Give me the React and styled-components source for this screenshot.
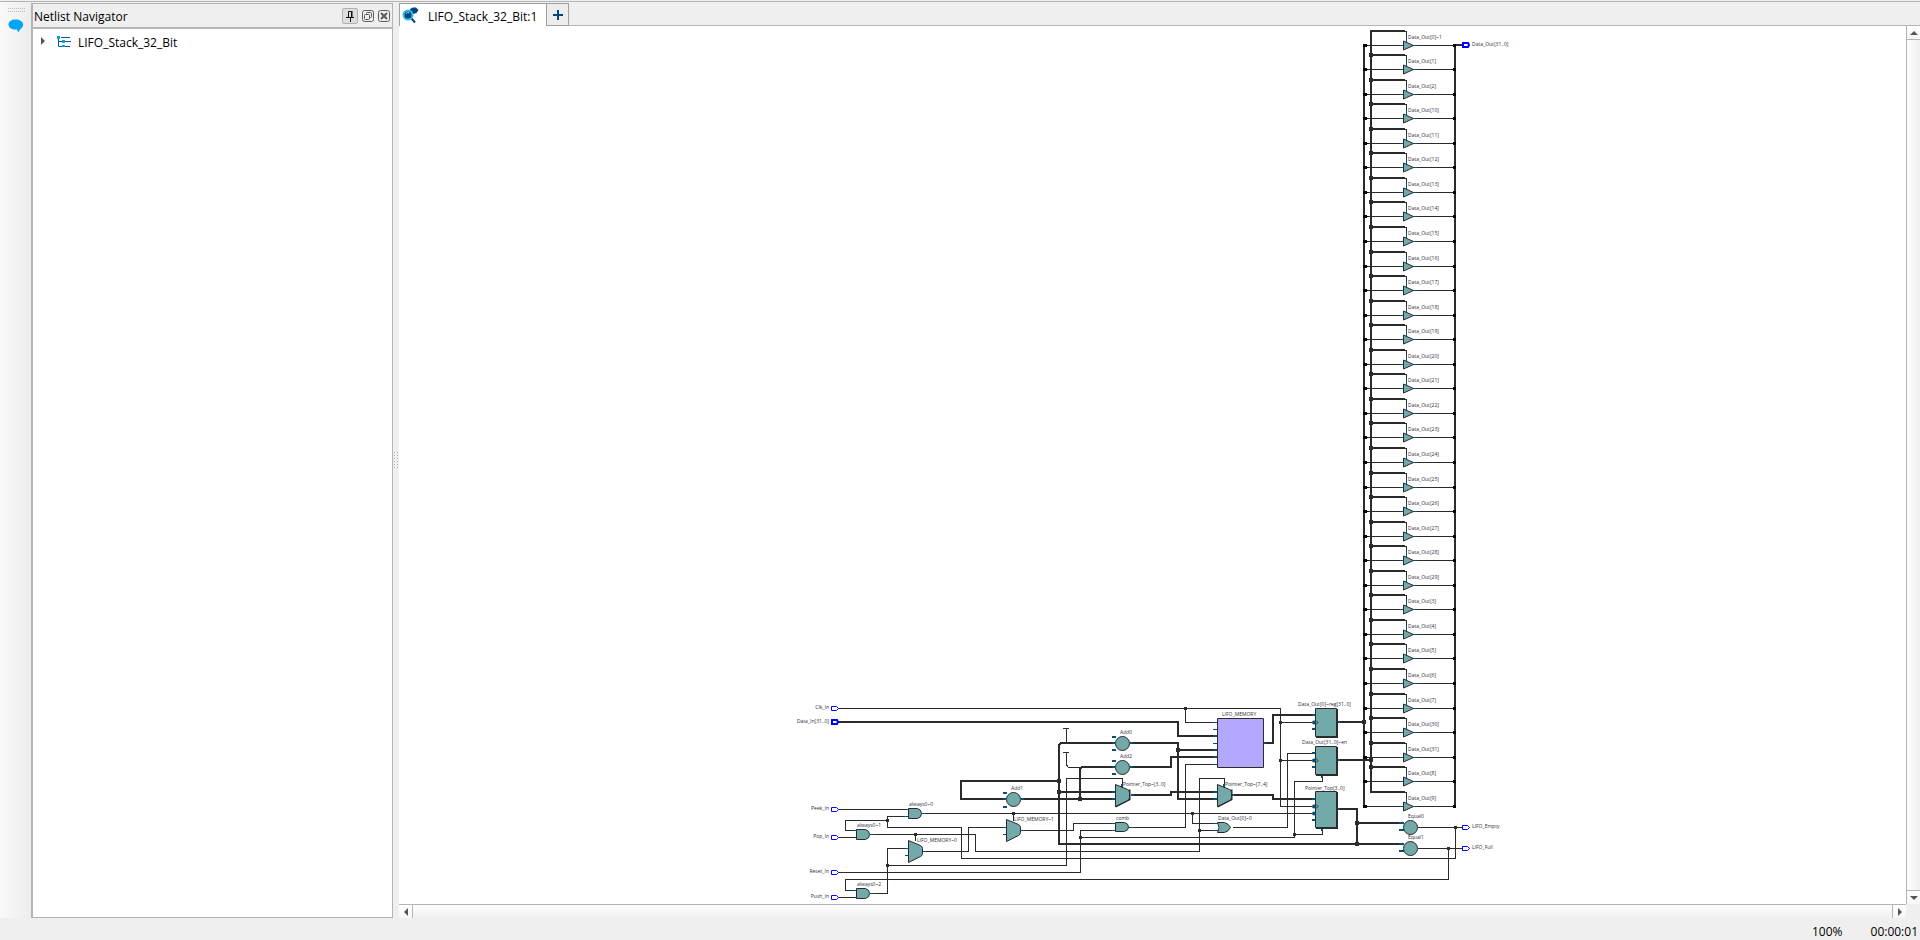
import React from 'react';
import styled, { createGlobalStyle } from 'styled-components';

const GlobalStyle = createGlobalStyle`
  *, *::before, *::after { box-sizing: border-box; }
  body {
    margin: 0;
    background: #efefef;
    color: #000;
    font: 12px/16px "Open Sans", "Noto Sans", sans-serif;
  }
  button { font: inherit; color: inherit; }
`;

const EDGE = '#b4b4b4';
const WIRE = '#2b2b2b';
const PIN = '#0a4f75';
const CELL = '#72aaaa';
const PORT = '#0000ff';

/* ---------- window frame ---------- */

const Window = styled.div`
  display: flex;
  flex-direction: column;
  height: 100vh;
  overflow: hidden;
  padding-top: 1px;
`;

const Main = styled.main`
  display: flex;
  flex: 1;
  min-height: 0;
  border-top: 1px solid ${EDGE};
`;

const ToolStrip = styled.aside`
  flex: 0 0 31px;
  display: flex;
  flex-direction: column;
  align-items: center;
  gap: 7px;
  padding: 6px 0 0 1px;
  background: linear-gradient(to right, #fafafa, #ececec);
`;

const ToolButton = styled.button`
  display: flex;
  padding: 0;
  border: 0;
  background: none;
`;

const Panel = styled.section`
  flex: 0 0 362px;
  display: flex;
  flex-direction: column;
  margin-top: 1px;
  border: 1px solid ${EDGE};
  border-left-width: 2px;
  background: #fff;
`;

const PanelHeader = styled.header`
  display: flex;
  align-items: center;
  gap: 4px;
  height: 25px;
  padding: 0 2px 0 1px;
  border-bottom: 2px solid ${EDGE};
  background: #efefef;
`;

const PanelTitle = styled.h1`
  flex: 1;
  margin: 0;
  font-size: 12px;
  font-weight: 400;
  line-height: 16px;
  padding-top: 3px;
`;

const HeaderButton = styled.button`
  display: flex;
  align-items: center;
  justify-content: center;
  width: ${(p) => (p.$pressed ? 16 : 12)}px;
  height: ${(p) => (p.$pressed ? 16 : 12)}px;
  padding: 0;
  border: ${(p) => (p.$pressed ? '1px solid #b0b0b0' : '0')};
  border-radius: 2px;
  background: ${(p) => (p.$pressed ? '#dedede' : 'none')};
`;

const Tree = styled.ul`
  flex: 1;
  margin: 0;
  padding: 4px 0 0 6px;
  list-style: none;
`;

const TreeRow = styled.li`
  display: flex;
  align-items: center;
  height: 18px;
`;

const Expander = styled.button`
  display: flex;
  width: 18px;
  padding: 0 0 2px 2px;
  border: 0;
  background: none;
`;

const TreeLabel = styled.span`
  padding: 1px 0 0 7px;
`;

const Splitter = styled.div`
  flex: 0 0 6px;
  display: flex;
  align-items: center;
  justify-content: center;
`;

/* ---------- schematic view ---------- */

const Viewer = styled.section`
  flex: 1;
  min-width: 0;
  display: flex;
  flex-direction: column;
`;

const TabBar = styled.nav`
  display: flex;
  height: 24px;
  padding-top: 1px;
  border-bottom: 1px solid ${EDGE};
`;

const Tab = styled.button`
  display: flex;
  align-items: center;
  width: 148px;
  height: 24px;
  padding: 0 0 0 2px;
  gap: 9px;
  border: 1px solid #a0a0a0;
  border-bottom-color: ${EDGE};
  background: #fff;

  span { padding-top: 4px; }
`;

const AddTab = styled.button`
  display: flex;
  align-items: center;
  justify-content: center;
  width: 22px;
  height: 23px;
  padding: 0;
  border: 1px solid #a0a0a0;
  border-left: 0;
  background: #ededed;
`;

const Stage = styled.div`
  flex: 1;
  min-height: 0;
  display: grid;
  grid-template: minmax(0, 1fr) 14px / minmax(0, 1fr) 14px;
`;

const Canvas = styled.div`
  overflow: hidden;
  background: #fff;

  svg { display: block; }
`;

const Scrollbar = styled.div`
  display: flex;
  justify-content: space-between;
  flex-direction: ${(p) => (p.$vertical ? 'column' : 'row')};
  border-left: ${(p) => (p.$vertical ? `1px solid ${EDGE}` : '0')};
  border-top: ${(p) => (p.$vertical ? '0' : `1px solid ${EDGE}`)};
  background: linear-gradient(${(p) => (p.$vertical ? 'to right' : 'to bottom')}, #fefefe, #f0f0f0);
`;

const ScrollButton = styled.button`
  display: flex;
  align-items: center;
  justify-content: center;
  flex: 0 0 14px;
  padding: 0;
  border: 0 solid ${EDGE};
  border-${(p) => p.$edge}-width: 1px;
  background: linear-gradient(#fff, #f6f6f6);
`;

const StatusBar = styled.footer`
  display: flex;
  justify-content: flex-end;
  gap: 28px;
  height: 22px;
  padding: 6px 2px 0 0;
`;

/* ---------- schematic drawing ---------- */

const Drawing = styled.svg`
  font-family: "Open Sans", "Noto Sans", sans-serif;
  font-size: 5px;
`;

const NetLabel = styled.text`
  fill: #2e2e3a;
`;

const Net = styled.path`
  fill: none;
  stroke: ${(p) => (p.$pin ? PIN : WIRE)};
  stroke-width: ${(p) => (p.$bus ? 2 : 1)};
  shape-rendering: crispEdges;
`;

const Body = styled.path`
  fill: ${(p) => p.$fill || CELL};
  stroke: ${WIRE};
  stroke-width: 1;
`;

const Dot = ({ x, y, bus }) => (
  <rect x={x - (bus ? 2 : 1)} y={y - (bus ? 2 : 1)} width={bus ? 4 : 3} height={bus ? 4 : 3} fill={WIRE} />
);

const Port = ({ x, y, bus }) => (
  <path
    d={bus
      ? `M${x + 1} ${y - 2}h5l1 2l-1 2h-5z`
      : `M${x + 0.5} ${y - 1.5}h5l2 2l-2 2h-5z`}
    fill="#fff"
    stroke={PORT}
    strokeWidth={bus ? 2 : 1}
  />
);

const AndGate = ({ x, y, w = 14, h = 10 }) => (
  <Body d={`M${x + 0.5} ${y + 0.5}h${w - 5}q4 1 4 ${h / 2}q0 ${h / 2 - 1} -4 ${h / 2}h-${w - 5}z`} />
);

const Mux = ({ x, y, h = 22, w = 14, shadow }) => (
  <>
    {shadow && (
      <path d={`M${x + 0.5} ${y + h + 0.5}l${w} -7v-10`} fill="none" stroke={WIRE} strokeWidth="2" />
    )}
    <Body d={`M${x + 0.5} ${y + 0.5}l${w - 2} 5q2 1 2 3v${h - 17}q0 2 -2 3l-${w - 2} 6z`} />
  </>
);

const Round = ({ x, y }) => (
  <circle cx={x} cy={y} r="7" fill={CELL} stroke={WIRE} strokeWidth="1" />
);

const Register = ({ y, h }) => (
  <>
    <rect x="1316" y={y + 1} width="22" height={h} fill={WIRE} />
    <Body d={`M1315.5 ${y + 0.5}h21v${h - 1}h-21z`} />
  </>
);

const order = [0, 1, 2, ...Array.from({ length: 20 }, (_, i) => i + 10), 3, 4, 5, 6, 7, 30, 31, 8, 9];

const outputs = order.map((bit, i) => ({
  name: bit === 0 ? 'Data_Out[0]~1' : `Data_Out[${bit}]`,
  y: Math.floor(45 + 24.558 * i),
  first: i === 0,
  last: i === order.length - 1,
}));

const Buffer = ({ name, y, first, last }) => (
  <g>
    <Net d={`M1364 ${y + 0.5}H1400M1417 ${y + 0.5}H1455`} />
    <Net $pin d={`M1400 ${y + 0.5}H1403M1413 ${y + 0.5}H1417`} />
    <Net $bus d={`M1370 ${y - 14}H1405`} />
    <Net d={`M1405 ${y - 13.5}h1.5v8`} />
    <Net $pin d={`M1406.5 ${y - 8}v5`} />
    <path d={`M1403.5 ${y - 4}v9l10 -4.5z`} fill={CELL} stroke={WIRE} />
    <rect x="1363" y={y - 1} width="4" height="3" fill="#000" />
    <rect x="1367" y={y} width="1" height="1" fill="#000" />
    <rect x="1453" y={y - 1} width="3" height="3" fill="#000" />
    {!first && !last && <Dot x={1371} y={y - 14} bus />}
    <NetLabel x="1408" y={y - 6}>{name}</NetLabel>
  </g>
);

const thinNets = [
  'M838 708.5H1280.5V806.5H1312',
  'M1185.5 708V722.5H1213',
  'M1280 722.5H1312M1280 760.5H1312',
  'M838 809.5H905',
  'M905 816.5H887.5V827.5H961.5V858.5H1455.5V827',
  'M887 820.5H845.5V830.5H854',
  'M838 837.5H856',
  'M873 834.5H975.5V851.5H1199.5V778.5H1224.5V784',
  'M915.5 834V841',
  'M905 848.5H887.5V893.5H872',
  'M926 851.5H968.5V827.5H1003',
  'M887 865.5H1066.5V778.5H1122.5V784',
  'M838 872.5H1080.5V830.5H1112',
  'M1080 837.5H1294.5V781.5H1322.5V778',
  'M1294 834.5H1322.5V831',
  'M854 890.5H845.5V879.5H1448.5V848',
  'M838 897.5H856',
  'M925 813.5H1312',
  'M1013.5 813V821',
  'M1192.5 813V823.5H1213',
  'M1024 830.5H1073.5V823.5H1112',
  'M1132 827.5H1185.5V764.5H1213',
  'M1199 830.5H1213',
  'M1233 827.5H1287.5V753.5H1312',
  'M1063 728.5H1069M1066.5 728V743',
  'M1063 752.5H1069M1066.5 752V765L1068.5 767.5H1082',
  'M1418 827.5H1462M1418 848.5H1462',
];

const busNets = [
  'M838 722H1178V736H1213',
  'M1003 799H961V781H1059',
  'M1112 743H1061L1059 745V844H1400',
  'M1059 792H1112',
  'M1024 799H1112',
  'M1080 799V769L1082 767H1112',
  'M1133 743H1178V799H1213',
  'M1178 750H1213',
  'M1133 767H1171V757H1213',
  'M1133 795H1171V792H1213',
  'M1235 795H1273V799H1312',
  'M1266 743H1273V715H1312',
  'M1340 722H1364M1340 760H1371',
  'M1340 809H1357V844',
  'M1357 823H1400',
  'M1364 44V807M1371 30V793M1455 44V807',
  'M1455 45H1463',
];

const thinPins = [
  'M905 809.5H908M904 816.5H908M922 813.5H926',
  'M853 830.5H856M870 834.5H874M853 890.5H856M870 893.5H874',
  'M905 848.5H908M905 855.5H908M922 851.5H926',
  'M1003 827.5H1006M1003 834.5H1006M1021 830.5H1025',
  'M1112 823.5H1115M1112 830.5H1115M1129 827.5H1133',
  'M1213 722.5H1217M1213 729.5H1217M1213 743.5H1217M1213 764.5H1217',
  'M1213 823.5H1219M1213 830.5H1219',
];

const busPins = [
  'M1003 792.5H1007M1003 799H1006M1003 806.5H1007M1021 799H1024',
  'M1112 736.5H1116M1112 743H1115M1112 750H1116M1130 743H1133',
  'M1112 760.5H1116M1112 767H1115M1112 774H1116M1130 767H1133',
  'M1112 792H1115M1112 799H1115M1131 795H1134',
  'M1213 736H1217M1213 750H1217M1213 757H1217M1263 743H1266',
  'M1213 792H1217M1213 799H1217M1232 795H1235',
  'M1312 715H1315M1312 729H1315M1312 753H1315M1312 767H1315M1312 799H1315M1312 820H1315',
  'M1337 722H1340M1337 760H1340M1337 809H1340',
  'M1322 775V778M1322 828V831M1122 784V788M1224 784V788',
  'M1399 823H1404M1399 830H1404M1399 844H1404M1399 851H1404',
];

const thinDots = [
  [1185, 708], [1280, 722], [1280, 760], [887, 820], [915, 834], [887, 865], [1080, 837],
  [1294, 834], [1013, 813], [1192, 813], [1199, 830], [1455, 827], [1448, 848],
];

const busDots = [
  [1059, 781], [1059, 792], [1080, 799], [1178, 750], [1364, 722], [1371, 760], [1357, 823], [1357, 844],
];

const inputs = [
  ['Clk_In', 708], ['Data_In[31..0]', 722, true], ['Peek_In', 809], ['Pop_In', 837], ['Reset_In', 872], ['Push_In', 897],
];

const outPorts = [['Data_Out[31..0]', 45, true], ['LIFO_Empty', 827], ['LIFO_Full', 848]];

const labels = [
  ['always0~0', 909, 806], ['always0~1', 857, 827], ['always0~2', 857, 886],
  ['LIFO_MEMORY~0', 917, 842], ['LIFO_MEMORY~1', 1014, 821], ['LIFO_MEMORY', 1222, 716],
  ['Add0', 1120, 734], ['Add2', 1120, 758], ['Add1', 1011, 790],
  ['Pointer_Top~[3..0]', 1123, 786], ['Pointer_Top~[7..4]', 1225, 786],
  ['comb', 1116, 820], ['Data_Out[0]~0', 1218, 820],
  ['Data_Out[0]~reg[31..0]', 1298, 706], ['Data_Out[31..0]~en', 1302, 744], ['Pointer_Top[3..0]', 1305, 790],
  ['Equal0', 1408, 818], ['Equal1', 1408, 839],
];

const Schematic = () => (
  <Drawing width="1507" height="878" viewBox="399 26 1507 878" role="img" aria-label="Schematic of LIFO_Stack_32_Bit">
    {busNets.map((d) => <Net key={d} $bus d={d} />)}
    {thinNets.map((d) => <Net key={d} d={d} />)}
    {thinPins.map((d) => <Net key={d} $pin d={d} />)}
    {busPins.map((d) => <Net key={d} $pin $bus d={d} />)}
    {outputs.map((o) => <Buffer key={o.name} {...o} />)}
    {thinDots.map(([x, y]) => <Dot key={`${x}-${y}`} x={x} y={y} />)}
    {busDots.map(([x, y]) => <Dot key={`${x}-${y}`} x={x} y={y} bus />)}

    <AndGate x={908} y={808} />
    <AndGate x={856} y={829} />
    <AndGate x={856} y={888} />
    <AndGate x={1115} y={822} h={9} />
    <Body d="M1217.5 822.5h7q4 1 6 5q-2 4 -6 5h-7q3 -5 0 -10z" />
    <Mux x={908} y={840} />
    <Mux x={1006} y={819} />
    <Mux x={1115} y={784} shadow />
    <Mux x={1217} y={784} shadow />
    <Round x={1013.5} y={799.5} />
    <Round x={1122.5} y={743.5} />
    <Round x={1122.5} y={767.5} />
    <Round x={1410.5} y={827.5} />
    <Round x={1410.5} y={848.5} />
    <Body $fill="#b2a8ff" d="M1217.5 718.5h46v49h-46z" />
    <Register y={708} h={29} />
    <Register y={746} h={29} />
    <Register y={791} h={37} />
    {[722, 760, 806, 813].map((y) => (
      <circle key={y} cx="1314" cy={y + 0.5} r="2" fill={PIN} />
    ))}
    {[722, 760, 806].map((y) => (
      <path key={y} d={`M1316 ${y - 1.5}l2 2l-2 2`} fill="none" stroke={WIRE} />
    ))}

    {inputs.map(([name, y, bus]) => (
      <g key={name}>
        <Port x={831} y={y} bus={bus} />
        <NetLabel x="829" y={y + 1} textAnchor="end">{name}</NetLabel>
      </g>
    ))}
    {outPorts.map(([name, y, bus]) => (
      <g key={name}>
        <Port x={1462} y={y} bus={bus} />
        <NetLabel x="1472" y={y + 1}>{name}</NetLabel>
      </g>
    ))}
    {labels.map(([name, x, y]) => <NetLabel key={name} x={x} y={y}>{name}</NetLabel>)}
  </Drawing>
);

/* ---------- icons ---------- */

const dots = (n, step) => Array.from({ length: n }, (_, i) => i * step);

const GripIcon = () => (
  <svg width="17" height="4" aria-hidden="true">
    {dots(9, 2).map((x) => (
      <g key={x} fill="#b8b8b8">
        <rect x={x} y="0" width="1" height="1" />
        <rect x={x} y="3" width="1" height="1" />
      </g>
    ))}
  </svg>
);

const SplitIcon = () => (
  <svg width="4" height="16" aria-hidden="true">
    {dots(6, 3).map((y) => (
      <g key={y} fill="#b4b4b4">
        <rect x="0" y={y} width="1" height="1" />
        <rect x="3" y={y} width="1" height="1" />
      </g>
    ))}
  </svg>
);

const ChatIcon = () => (
  <svg width="16" height="14" viewBox="0 0 16 14" aria-hidden="true">
    <path d="M7.500 .5C3.500 .5.500 2.500.500 5.500s3 5 7 5h1.500l1 3 2.500-3.600c1.600-.900 2.700-2.500 2.700-4.400C15.200 2.500 11.500.5 7.500.5z" fill="#05a5f5" />
  </svg>
);

const PinIcon = () => (
  <svg width="10" height="12" viewBox="0 0 10 12" fill="none" stroke="#111" aria-hidden="true">
    <path d="M3.500 7V1.500H6.500V7M1 7.500H9M5.500 8V12" />
    <path d="M7 1V7" />
  </svg>
);

const RestoreIcon = () => (
  <svg width="12" height="12" viewBox="0 0 12 12" fill="none" stroke="#5a5a5a" aria-hidden="true">
    <rect x=".5" y=".5" width="11" height="11" rx="2" />
    <rect x="4.500" y="2.500" width="5" height="5" rx="1" />
    <rect x="2.500" y="4.500" width="5" height="5" rx="1" fill="#efefef" />
  </svg>
);

const CloseIcon = () => (
  <svg width="12" height="12" viewBox="0 0 12 12" fill="none" stroke="#5a5a5a" aria-hidden="true">
    <rect x=".5" y=".5" width="11" height="11" rx="2" />
    <path d="M3 3l6 6M9 3l-6 6" strokeWidth="2" />
  </svg>
);

const HierarchyIcon = () => (
  <svg width="14" height="12" viewBox="0 0 14 12" aria-hidden="true">
    <path d="M1.500 3V10.500H5M1.500 5.500H5M4 1.500H13M8 5.500H14M8 10.500H13" fill="none" stroke="#0a5a8c" />
    <path d="M0 0h3v3H0zM5 4h3v3H5zM5 9h3v2H5z" fill="#05a0e6" />
  </svg>
);

const SearchPinIcon = () => (
  <svg width="17" height="17" viewBox="0 0 17 17" aria-hidden="true">
    <path d="M8 2l3-1.500h3l2.500 2.500-2 3-3 1-3-2z" fill="#00467f" />
    <path d="M9.500 11.500l3.500 4" stroke="#00467f" strokeWidth="2" />
    <circle cx="6" cy="8" r="4.500" fill="#00467f" stroke="#3fb5e8" strokeWidth="2" />
    <path d="M4 6.500q1.500-1.500 3.500-.500" fill="none" stroke="#9bdcf7" />
  </svg>
);

const PlusIcon = () => (
  <svg width="10" height="10" viewBox="0 0 10 10" aria-hidden="true">
    <path d="M5 0V10M0 5H10" stroke="#00467f" strokeWidth="2" />
  </svg>
);

const arrows = {
  up: [8, 4, 'M0 4L4 0L8 4z'],
  down: [8, 4, 'M0 0L4 4L8 0z'],
  left: [4, 8, 'M4 0L0 4L4 8z'],
  right: [4, 8, 'M0 0L4 4L0 8z'],
};

const Arrow = ({ to }) => {
  const [w, h, d] = arrows[to];
  return (
    <svg width={w} height={h} viewBox={`0 0 ${w} ${h}`} aria-hidden="true">
      <path d={d} fill="#555" />
    </svg>
  );
};

export default function App() {
  return (
    <>
      <GlobalStyle />
      <Window>
        <Main>
          <ToolStrip>
            <GripIcon />
            <ToolButton aria-label="Messages"><ChatIcon /></ToolButton>
          </ToolStrip>

          <Panel>
            <PanelHeader>
              <PanelTitle>Netlist Navigator</PanelTitle>
              <HeaderButton $pressed aria-label="Pin panel"><PinIcon /></HeaderButton>
              <HeaderButton aria-label="Float panel"><RestoreIcon /></HeaderButton>
              <HeaderButton aria-label="Close panel"><CloseIcon /></HeaderButton>
            </PanelHeader>
            <Tree>
              <TreeRow>
                <Expander aria-label="Expand"><Arrow to="right" /></Expander>
                <HierarchyIcon />
                <TreeLabel>LIFO_Stack_32_Bit</TreeLabel>
              </TreeRow>
            </Tree>
          </Panel>

          <Splitter><SplitIcon /></Splitter>

          <Viewer>
            <TabBar>
              <Tab><SearchPinIcon /><span>LIFO_Stack_32_Bit:1</span></Tab>
              <AddTab aria-label="New tab"><PlusIcon /></AddTab>
            </TabBar>
            <Stage>
              <Canvas><Schematic /></Canvas>
              <Scrollbar $vertical>
                <ScrollButton $edge="bottom" aria-label="Scroll up"><Arrow to="up" /></ScrollButton>
                <ScrollButton $edge="top" aria-label="Scroll down"><Arrow to="down" /></ScrollButton>
              </Scrollbar>
              <Scrollbar>
                <ScrollButton $edge="right" aria-label="Scroll left"><Arrow to="left" /></ScrollButton>
                <ScrollButton $edge="left" aria-label="Scroll right"><Arrow to="right" /></ScrollButton>
              </Scrollbar>
            </Stage>
          </Viewer>
        </Main>
        <StatusBar>
          <span>100%</span>
          <span>00:00:01</span>
        </StatusBar>
      </Window>
    </>
  );
}
